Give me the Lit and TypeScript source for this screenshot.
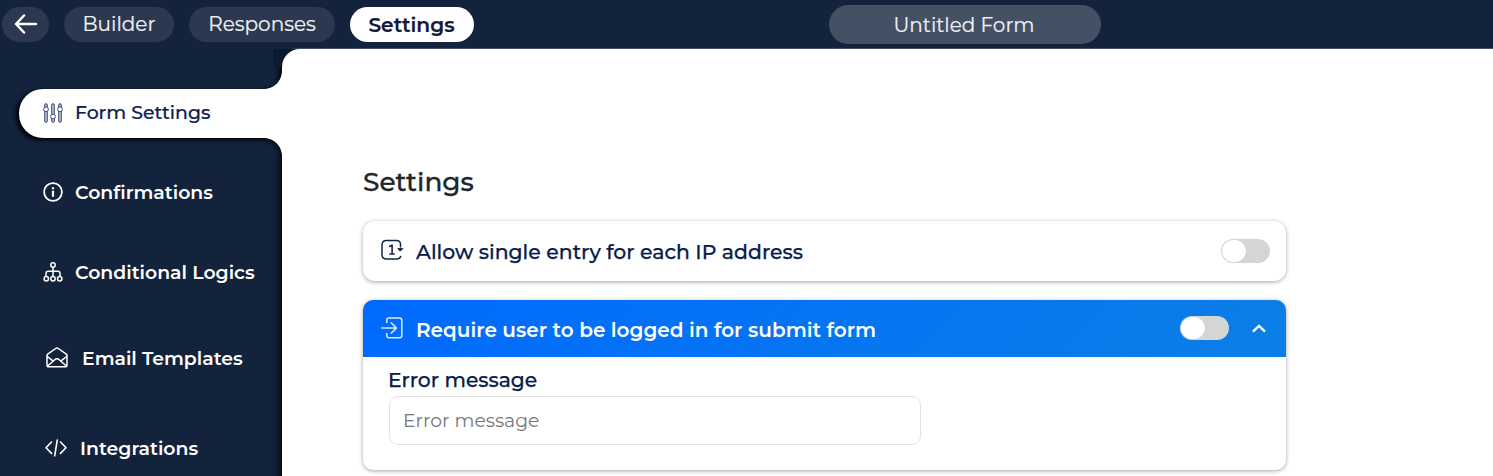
import { LitElement, html, css, svg } from "lit";
import { customElement, property } from "lit/decorators.js";
import { classMap } from "lit/directives/class-map.js";

const icons = {
  back: svg`<svg width="24" height="20" viewBox="0 0 24 20" fill="none" stroke="#fff" stroke-width="2.5" stroke-linecap="round" stroke-linejoin="round"><path d="M22 10H2M10 1.500L2 10l8 8.500"/></svg>`,
  sliders: svg`<svg width="20" height="20" viewBox="0 0 20 20" fill="#fff" stroke="#3c4f7b" stroke-width="1">
    <rect x="1.700" y="0.700" width="2.600" height="18.600" rx="1.300" fill="#b9c2d4"/><rect x="8.700" y="0.700" width="2.600" height="18.600" rx="1.300" fill="#b9c2d4"/><rect x="15.700" y="0.700" width="2.600" height="18.600" rx="1.300" fill="#b9c2d4"/>
    <circle cx="3" cy="6.300" r="2.400"/><circle cx="10" cy="13.500" r="2.400"/><circle cx="17" cy="6.300" r="2.400"/></svg>`,
  info: svg`<svg width="20" height="20" viewBox="0 0 20 20" fill="none" stroke="#fff" stroke-width="1.800"><circle cx="10" cy="10" r="8.900"/><path d="M10 8.800v6M10 5.200v2" stroke-width="2.200"/></svg>`,
  tree: svg`<svg width="20" height="20" viewBox="0 0 20 20" fill="none" stroke="#fff" stroke-width="1.500"><circle cx="10" cy="3" r="2.200"/><circle cx="3.300" cy="16.700" r="2.200"/><circle cx="10" cy="16.700" r="2.200"/><circle cx="16.700" cy="16.700" r="2.200"/><path d="M10 5.200v9.300M3 14.500v-3Q3 9.300 5.200 9.300h9.600Q17 9.300 17 11.500v3"/></svg>`,
  mail: svg`<svg width="22" height="21" viewBox="0 0 22 21" fill="none" stroke="#fff" stroke-width="1.500" stroke-linejoin="round"><path d="M1 8.500Q1 7.700 1.700 7.200L9.700 1.500Q11 .6 12.300 1.500L20.300 7.200Q21 7.700 21 8.500V18Q21 19.800 19.200 19.800H2.800Q1 19.800 1 18ZM1.300 9.500L7.300 14.200M20.700 9.500L14.700 14.200M1.600 19L8.800 12.700Q11 11 13.200 12.700L20.400 19"/></svg>`,
  code: svg`<svg width="22" height="18" viewBox="0 0 22 18" fill="none" stroke="#fff" stroke-width="1.600" stroke-linecap="round" stroke-linejoin="round"><path d="M6.500 3L1 8.700l5.500 5.700M15.500 3L21 8.700l-5.500 5.700M12.300 1L9.700 16.800"/></svg>`,
  single: svg`<svg width="24" height="22" viewBox="0 0 24 22" fill="none" stroke="#14254c" stroke-width="1.500" stroke-linecap="round" stroke-linejoin="round"><path d="M19.500 8V5.500Q19.500 1.500 15.500 1.500H5.500Q1 1.500 1 6v9.500Q1 20 5.500 20h10Q19 20 19.700 17.500"/><path d="M8.800 7.300l2.300-1.100v8.600M8.900 15h4.300" stroke-width="1.600"/><path d="M17.200 9.600H21.800L19.500 11.900Z" fill="#14254c" stroke-width="1"/></svg>`,
  login: svg`<svg width="24" height="22" viewBox="0 0 24 22" fill="none" stroke="#dcebff" stroke-width="1.500" stroke-linecap="round" stroke-linejoin="round"><path d="M5.800 5.500V3Q5.800 1 7.800 1H18.500Q20.800 1 20.800 3.300V18.500Q20.800 20.800 18.500 20.800H7.800Q5.800 20.800 5.800 18.800V16.500M.5 11H15.500M10.200 5.700L15.500 11L10.200 16.300"/></svg>`,
  caret: svg`<svg width="14" height="9" viewBox="0 0 14 9" fill="none" stroke="#fff" stroke-width="2.400"><path d="M1 7.700L7 1.900L13 7.700"/></svg>`,
};

@customElement("nav-entry")
class NavEntry extends LitElement {
  @property() icon: keyof typeof icons = "info";
  @property({ type: Boolean }) active = false;

  static styles = css`
    :host { display: block; }
    .entry { position: relative; display: flex; align-items: center; height: 49px; margin-left: 19px; padding-left: 24px; color: #fff; font-weight: 600; }
    .glyph { display: flex; flex: none; padding-bottom: 1px; }
    .label { white-space: nowrap; padding-left: 12px; }
    .mail .glyph { padding: 0 0 2px 3px; }
    .mail .label { padding-left: 14px; }
    .code .glyph { padding: 0 0 2px 2px; }
    .code .label { padding-left: 13px; }
    .sliders .label { padding: 0 0 2px 12px; -webkit-text-stroke: 0.200px; }
    .active { background: #fff; color: #0d2150; font-weight: 500; border-radius: 24px 0 0 24px; box-shadow: -3px 2px 4px #000; }
    .active::before, .active::after { content: ""; position: absolute; right: 0; width: 18px; height: 18px; }
    .active::before { bottom: 100%; background: radial-gradient(circle at 0 0, transparent 13px, rgba(0, 0, 0, 0.350) 17.500px, #fff 18.300px); }
    .active::after { top: 100%; background: radial-gradient(circle at 0 100%, #13233c 11px, #0c182b 15px, #030710 17.500px, #fff 18.300px); }
  `;

  render() {
    return html`<div class=${classMap({ entry: true, active: this.active, [this.icon]: true })}>
      <span class="glyph">${icons[this.icon]}</span><span class="label"><slot></slot></span>
    </div>`;
  }
}

@customElement("toggle-switch")
class ToggleSwitch extends LitElement {
  static styles = css`
    :host { display: block; }
    .track { box-sizing: border-box; width: 49px; height: 24px; padding: 1px; border-radius: 12px; background: #d5d5d5; }
    .thumb { width: 24px; height: 22px; border-radius: 12px; background: #fff; box-shadow: 0 0 1px #bbb; }
  `;
  render() {
    return html`<div class="track" role="switch" aria-checked="false"><div class="thumb"></div></div>`;
  }
}

@customElement("app-root")
class AppRoot extends LitElement {
  static styles = css`
    * { box-sizing: border-box; }
    :host { display: block; height: 476px; overflow: hidden; font-family: Montserrat, Inter, sans-serif; background: #13233c; }
    .topbar { display: flex; align-items: center; height: 48px; padding: 1px 0 0 2px; gap: 15px; }
    .pill { display: flex; align-items: center; justify-content: center; height: 35px; padding-bottom: 1px; border-radius: 18px; background: #2b3850; color: #f0f1f3; font-size: 20px; white-space: nowrap; -webkit-text-stroke: 0.200px; }
    .back { width: 47px; }
    .builder { width: 110px; }
    .responses { width: 146px; }
    .current { width: 124px; padding-right: 1px; background: #fff; color: #14183a; font-weight: 600; font-size: 20.200px; }
    .title { width: 272px; height: 39px; margin-left: 340px; padding: 0 2px 0 0; border-radius: 20px; background: #445064; }
    .body { display: flex; height: 428px; }
    .sidebar { display: flex; flex-direction: column; flex: none; width: 282px; padding-top: 41px; font-size: 18.850px;
      background: linear-gradient(90deg, transparent 273px, #0b1931 273px) 0 1px / 282px 17px no-repeat,
        linear-gradient(90deg, transparent 272px, rgba(0, 0, 0, 0.200) 277px, rgba(0, 0, 0, 0.700) 282px) 0 18px no-repeat; }
    .n2 { margin-top: 30px; }
    .n3 { margin-top: 31px; }
    .n4 { margin-top: 37px; }
    .n5 { margin-top: 41px; }
    .corner { flex: 1; background: linear-gradient(90deg, #13233c 8px, #46536a 18px) 0 0 / 100% 1px no-repeat #09172f; padding-top: 1px; position: relative; }
    .main { height: 427px; padding: 116px 0 0 81px; border-top-left-radius: 18px; background: #fff; }
    h1 { margin: 0; height: 33px; line-height: 34px; color: #212529; font-size: 26.400px; font-weight: 500; -webkit-text-stroke: 0.300px; }
    .card { width: 923px; border-radius: 12px; box-shadow: 0 1px 4px rgba(0, 0, 0, 0.360); background: #fff; }
    .row { display: flex; align-items: center; padding-left: 18px; color: #0a1c4a; white-space: nowrap; }
    .row svg { flex: none; }
    .name { flex: 1; padding-left: 11px; }
    .first { margin-top: 23px; height: 60px; padding-right: 16px; }
    .first svg { margin-bottom: 2px; }
    .first .name { font-weight: 500; font-size: 20.400px; padding-top: 1px; -webkit-text-stroke: 0.250px; }
    .second { margin-top: 19px; height: 170px; overflow: hidden; border-radius: 10px; }
    .banner { height: 57px; padding-right: 20px; color: #fff; background: linear-gradient(135deg, #006aff, #0b7fe6); }
    .banner svg { margin-bottom: 1px; }
    .banner .name { font-weight: 600; font-size: 20px; padding: 2px 0 0 11px; }
    .banner toggle-switch { margin: 0 23px 2px 0; }
    .field { display: flex; flex-direction: column; padding: 10px 26px; }
    label { height: 29px; line-height: 26px; margin-left: -1px; color: #0a1c4a; font-size: 20.300px; font-weight: 500; -webkit-text-stroke: 0.250px; }
    input { width: 532px; height: 49px; padding: 0 13px; border: 1px solid #e2e2e2; border-radius: 9px; outline: none; background: #fff; font: 400 18.800px Montserrat, Inter, sans-serif; }
    input::placeholder { color: #74777b; opacity: 1; }
  `;

  render() {
    return html`
      <header class="topbar">
        <div class="pill back">${icons.back}</div>
        <div class="pill builder">Builder</div>
        <div class="pill responses">Responses</div>
        <div class="pill current">Settings</div>
        <div class="pill title">Untitled Form</div>
      </header>
      <div class="body">
        <nav class="sidebar">
          <nav-entry class="n1" icon="sliders" active>Form Settings</nav-entry>
          <nav-entry class="n2" icon="info">Confirmations</nav-entry>
          <nav-entry class="n3" icon="tree">Conditional Logics</nav-entry>
          <nav-entry class="n4" icon="mail">Email Templates</nav-entry>
          <nav-entry class="n5" icon="code">Integrations</nav-entry>
        </nav>
        <div class="corner">
          <main class="main">
            <h1>Settings</h1>
            <section class="card row first">
              ${icons.single}<span class="name">Allow single entry for each IP address</span><toggle-switch></toggle-switch>
            </section>
            <section class="card second">
              <div class="row banner">
                ${icons.login}<span class="name">Require user to be logged in for submit form</span><toggle-switch></toggle-switch>${icons.caret}
              </div>
              <div class="field">
                <label for="error">Error message</label>
                <input id="error" placeholder="Error message" />
              </div>
            </section>
          </main>
        </div>
      </div>
    `;
  }
}
